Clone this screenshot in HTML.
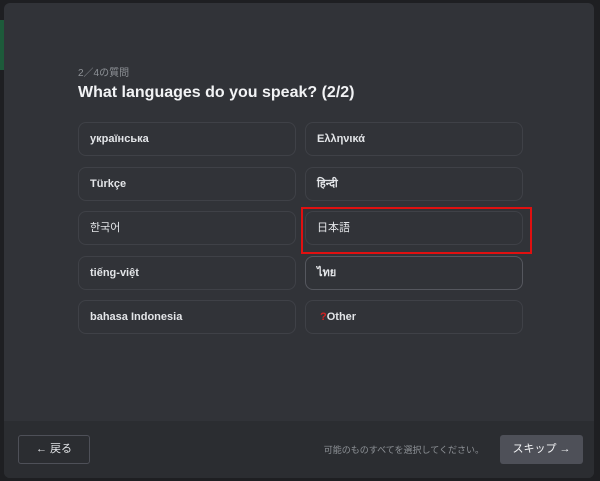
<html><head><style>
body{margin:0;width:600px;height:481px;background:#1e1f22;position:relative;overflow:hidden;font-family:"Liberation Sans","Noto Sans CJK JP",sans-serif}
.m{position:absolute;left:4px;top:3px;width:590px;height:475px;background:#313338;border-radius:6px;overflow:hidden}
.ft{position:absolute;left:0;right:0;bottom:0;height:57px;background:#2b2d31}
.b{position:absolute;width:218px;height:34px;border:1px solid #3f4147;border-radius:8px;color:#e3e5e8;font-size:11px;font-weight:bold;line-height:32px;padding-left:11px;box-sizing:border-box}
</style></head><body>
<div style="position:absolute;left:0;top:20px;width:4px;height:50px;background:#1d5a3a"></div>
<div class="m">
<div style="position:absolute;left:74px;top:61px;font-size:10px;color:#8e9297">2／4の質問</div>
<div style="position:absolute;left:74px;top:81px;font-size:16px;font-weight:bold;color:#f2f3f5">What languages do you speak? (2/2)</div>
<div class="b" style="left:74px;top:119px">українська</div>
<div class="b" style="left:301px;top:119px">Ελληνικά</div>
<div class="b" style="left:74px;top:164px">Türkçe</div>
<div class="b" style="left:301px;top:164px">हिन्दी</div>
<div class="b" style="left:74px;top:208px;font-weight:normal">한국어</div>
<div class="b" style="left:301px;top:208px;font-weight:normal">日本語</div>
<div class="b" style="left:74px;top:253px">tiếng-việt</div>
<div class="b" style="left:301px;top:253px;border-color:#55575e">ไทย</div>
<div class="b" style="left:74px;top:297px">bahasa Indonesia</div>
<div class="b" style="left:301px;top:297px;padding-left:14px"><span style="color:#d42020">?</span>Other</div>
<div style="position:absolute;left:297px;top:204px;width:231px;height:47px;border:2px solid #e01010;box-sizing:border-box"></div>
<div class="ft">
<div style="position:absolute;left:14px;top:14px;width:72px;height:29px;border:1px solid #4e5058;border-radius:3px;box-sizing:border-box;color:#e3e5e8;font-size:11px;line-height:27px;text-align:center">← 戻る</div>
<div style="position:absolute;right:110px;top:22px;font-size:9px;color:#8e9297">可能のものすべてを選択してください。</div>
<div style="position:absolute;left:496px;top:14px;width:83px;height:29px;background:#4e5058;border-radius:3px;color:#f2f3f5;font-size:11px;line-height:29px;text-align:center">スキップ →</div>
</div>
</div>
</body></html>
